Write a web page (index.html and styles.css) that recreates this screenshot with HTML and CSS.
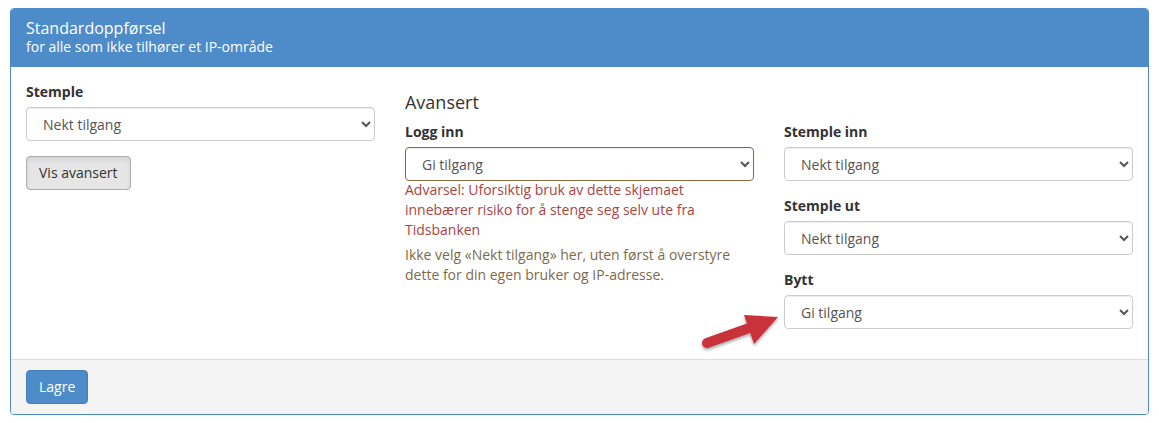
FILE: index.html
```html
<!DOCTYPE html>
<html lang="no">
<head>
<meta charset="utf-8">
<title>Standardoppførsel</title>
<link rel="stylesheet" href="styles.css">
</head>
<body>
<div class="panel">
  <div class="panel-heading">
    <div class="panel-title">Standardoppførsel</div>
    <div class="panel-sub">for alle som ikke tilhører et IP-område</div>
  </div>
  <div class="panel-body">
    <div class="row">
      <div class="col col-4">
        <div class="form-group">
          <label class="lbl">Stemple</label>
          <select class="sel"><option>Nekt tilgang</option><option>Gi tilgang</option></select>
        </div>
        <button class="btn btn-default">Vis avansert</button>
      </div>
      <div class="col col-8">
        <h4 class="adv-title">Avansert</h4>
        <div class="row">
          <div class="col col-6">
            <div class="form-group warn">
              <label class="lbl">Logg inn</label>
              <select class="sel sel-warn"><option>Gi tilgang</option><option>Nekt tilgang</option></select>
              <p class="warn-text">Advarsel: Uforsiktig bruk av dette skjemaet innebærer risiko for å stenge seg selv ute fra Tidsbanken</p>
              <p class="help-text">Ikke velg «Nekt tilgang» her, uten først å overstyre dette for din egen bruker og IP-adresse.</p>
            </div>
          </div>
          <div class="col col-6">
            <div class="form-group">
              <label class="lbl">Stemple inn</label>
              <select class="sel"><option>Nekt tilgang</option><option>Gi tilgang</option></select>
            </div>
            <div class="form-group">
              <label class="lbl">Stemple ut</label>
              <select class="sel"><option>Nekt tilgang</option><option>Gi tilgang</option></select>
            </div>
            <div class="form-group">
              <label class="lbl">Bytt</label>
              <select class="sel"><option>Gi tilgang</option><option>Nekt tilgang</option></select>
            </div>
          </div>
        </div>
      </div>
    </div>
  </div>
  <div class="panel-footer">
    <button class="btn btn-primary">Lagre</button>
  </div>
</div>
<svg class="arrow" width="110" height="60" viewBox="0 0 110 60">
  <defs>
    <filter id="sh" x="-20%" y="-20%" width="140%" height="160%">
      <feDropShadow dx="0" dy="2" stdDeviation="1.8" flood-color="#000" flood-opacity="0.35"/>
    </filter>
  </defs>
  <g filter="url(#sh)">
    <line x1="17" y1="44" x2="62" y2="28" stroke="#c9323b" stroke-width="10" stroke-linecap="round"/>
    <polygon points="54,16 88,18 64,45" fill="#c9323b"/>
  </g>
</svg>
</body>
</html>
```

FILE: styles.css
```css
* { box-sizing: border-box; }
html, body { margin: 0; padding: 0; background: #fff; }
body {
  padding: 8px 10px;
  font-family: "Open Sans", "Liberation Sans", sans-serif;
  font-size: 14px;
  line-height: 20px;
  color: #333;
  position: relative;
}
.panel {
  border: 1px solid #4d89c8;
  border-radius: 4px;
  background: #fff;
  overflow: hidden;
}
.panel-heading {
  background: #4e8bc9;
  color: #fff;
  padding: 9px 15px 9px;
  height: 58px;
}
.panel-title { font-size: 16px; line-height: 20px; }
.panel-sub { font-size: 14px; line-height: 18px; }
.panel-body { padding: 15px; }
.row { display: flex; margin: 0 -15px; }
.col { padding: 0 15px; }
.col-4 { width: 33.3333%; }
.col-8 { width: 66.6667%; }
.col-6 { width: 50%; }
.form-group { margin-bottom: 15px; }
.lbl { display: block; font-weight: 700; margin-bottom: 5px; line-height: 20px; }
.sel {
  display: block;
  width: 100%;
  height: 34px;
  padding: 6px 12px;
  font-family: inherit;
  font-size: 14px;
  color: #555;
  background: #fff;
  border: 1px solid #ccc;
  border-radius: 4px;
  box-shadow: inset 0 1px 1px rgba(0,0,0,.075);
}
.sel-warn { border-color: #8a6d3b; }
.adv-title {
  font-size: 18px;
  font-weight: 500;
  line-height: 20px;
  margin: 10px 0 10px;
  color: #333;
}
.warn-text { margin: -1px 0 0; color: #a94442; }
.help-text { margin: 5px 0 10px; color: #7d6a4c; }
.btn {
  display: inline-block;
  height: 34px;
  padding: 6px 12px;
  font-family: inherit;
  font-size: 14px;
  line-height: 20px;
  border-radius: 4px;
  border: 1px solid transparent;
  cursor: pointer;
}
.btn-default {
  background: #e6e6e6;
  border-color: #adadad;
  color: #333;
  box-shadow: inset 0 3px 5px rgba(0,0,0,.08);
}
.btn-primary {
  background: #4e8bc9;
  border-color: #4580bd;
  color: #fff;
}
.panel-footer {
  background: #f4f4f4;
  border-top: 1px solid #ddd;
  padding: 10px 15px;
}
.arrow {
  position: absolute;
  left: 690px;
  top: 299px;
}
```
